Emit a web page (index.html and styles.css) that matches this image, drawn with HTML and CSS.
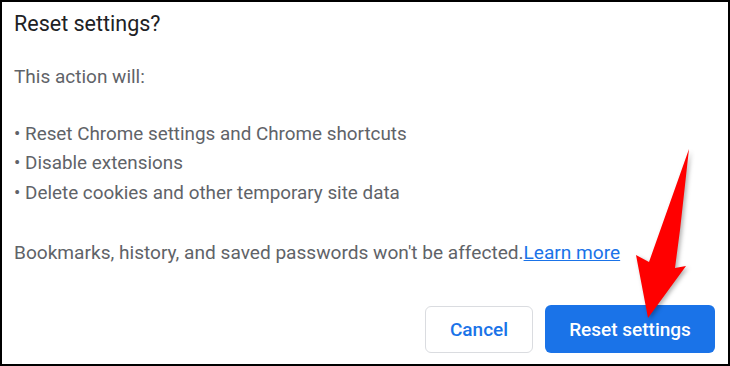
FILE: index.html
```html
<!DOCTYPE html>
<html>
<head>
<meta charset="utf-8">
<link rel="stylesheet" href="styles.css">
</head>
<body>
<div class="dialog">
  <h1 class="title">Reset settings?</h1>
  <p class="intro">This action will:</p>
  <ul class="list">
    <li>• Reset Chrome settings and Chrome shortcuts</li>
    <li>• Disable extensions</li>
    <li>• Delete cookies and other temporary site data</li>
  </ul>
  <p class="note">Bookmarks, history, and saved passwords won't be affected.<a class="link" href="#">Learn more</a></p>
  <div class="actions">
    <button class="btn btn-cancel">Cancel</button>
    <button class="btn btn-primary">Reset settings</button>
  </div>
  <svg class="arrow" width="80" height="190" viewBox="620 140 80 190">
    <polygon points="689,149 680,230 675,268 686,266 648,318 636,255 649,262" fill="#ff0000"/>
  </svg>
</div>
</body>
</html>
```
FILE: styles.css
```css
html, body {
  margin: 0;
  padding: 0;
  background: #fff;
}
.dialog {
  position: relative;
  box-sizing: border-box;
  width: 730px;
  height: 366px;
  border: 2px solid #000;
  padding: 0 13px 0 12px;
  font-family: Roboto, "Liberation Sans", sans-serif;
  display: flex;
  flex-direction: column;
}
.title {
  margin: 9px 0 0;
  font-size: 21.5px;
  font-weight: 400;
  color: #202124;
  line-height: 26px;
}
.intro {
  margin: 27px 0 0;
  font-size: 19px;
  color: #5f6368;
  line-height: 26px;
}
.list {
  list-style: none;
  margin: 29.5px 0 0;
  padding: 0;
  font-size: 18.85px;
  color: #5f6368;
  line-height: 29.5px;
}
.note {
  margin: 31.5px 0 0;
  font-size: 19.1px;
  color: #5f6368;
  line-height: 26px;
}
.link {
  color: #1a73e8;
  text-decoration: underline;
}
.actions {
  margin-top: auto;
  margin-bottom: 11px;
  display: flex;
  justify-content: flex-end;
  align-items: center;
  gap: 12px;
}
.btn {
  font-family: Roboto, "Liberation Sans", sans-serif;
  font-size: 19px;
  font-weight: 500;
  border-radius: 6px;
  height: 48px;
  cursor: pointer;
}
.btn-cancel {
  width: 108px;
  height: 47px;
  background: #fff;
  color: #1a73e8;
  border: 1px solid #dadce0;
}
.btn-primary {
  width: 170px;
  background: #1a73e8;
  color: #fff;
  border: none;
}
.arrow {
  position: absolute;
  left: 618px;
  top: 138px;
  filter: drop-shadow(2px 2px 2px rgba(0,0,0,0.3));
}
```
